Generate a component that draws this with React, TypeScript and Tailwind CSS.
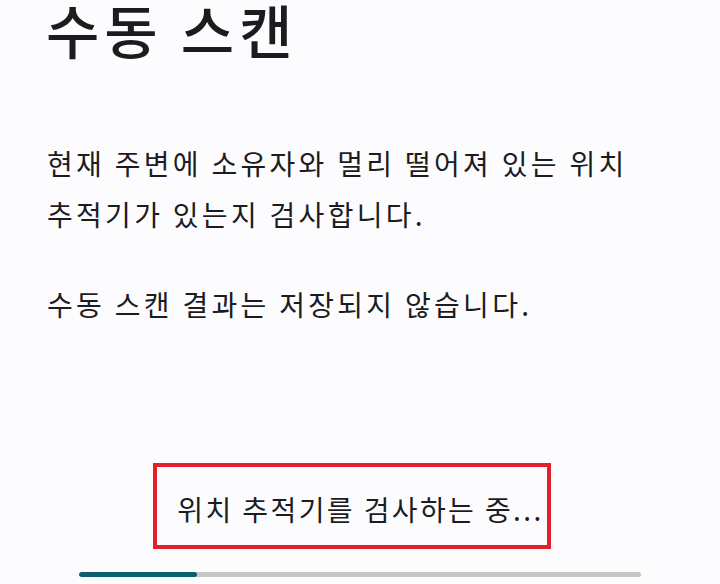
export default function App() {
  const progress = 21;
  return (
    <div
      className="w-[720px] h-[584px] overflow-hidden bg-[#fcfcfe] text-[#1c1c1e] flex flex-col"
      style={{ fontFamily: '"Noto Sans CJK KR", "Noto Sans", sans-serif' }}
    >
      <h1 className="pl-[46px] text-[58px] leading-[58px] font-medium tracking-[5px]">수동 스캔</h1>

      <div className="pl-[47px] pr-[20px] mt-[80px] text-[28px] leading-[51px] tracking-[3.3px]">
        <p>
          현재 주변에 소유자와 멀리 떨어져 있는 위치
          <br />
          추적기가 있는지 검사합니다.
        </p>
        <p className="mt-[39px]">수동 스캔 결과는 저장되지 않습니다.</p>
      </div>

      <div className="flex-1" />

      <div className="flex justify-center">
        <div className="ml-[-17px] w-[398px] h-[86px] border-[4px] border-[#e4202b] flex items-center justify-center pl-[18px]">
          <span className="text-[28px] leading-none pt-[6px] tracking-[2.4px]">위치 추적기를 검사하는 중...</span>
        </div>
      </div>

      <div className="mx-[79px] mt-[23px] mb-[7px] h-[5px] rounded-full bg-[#c6c6c6] overflow-hidden">
        <div className="h-full rounded-full bg-[#0b5f73]" style={{ width: `${progress}%` }} />
      </div>
    </div>
  );
}
